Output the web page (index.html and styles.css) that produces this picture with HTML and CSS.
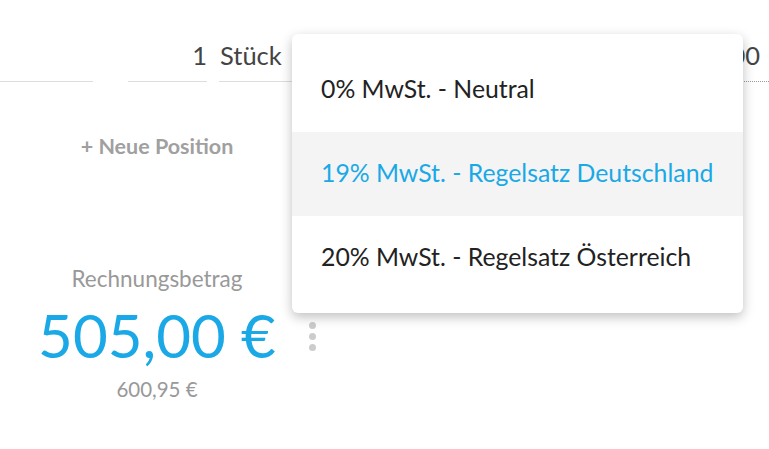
FILE: index.html
```
<!doctype html>
<html lang="de">

<head>
	<meta charset="UTF-8" />
	<meta name="viewport" content="width=device-width, initial-scale=1.0" />
	<title>Rechnung</title>
	<link rel="stylesheet" href="styles.css">
</head>

<body>
	<div class="page">
		<div class="position-row">
			<div class="field field-name"></div>
			<div class="field field-qty">1</div>
			<div class="field field-unit">Stück</div>
			<div class="field field-price">00</div>
		</div>

		<div class="add-row">
			<span class="add-position">+ Neue Position</span>
		</div>

		<div class="summary">
			<div class="total">
				<div class="total-label">Rechnungsbetrag</div>
				<div class="total-amount">505,00 €</div>
				<div class="total-gross">600,95 €</div>
			</div>
			<div class="kebab">
				<span></span>
				<span></span>
				<span></span>
			</div>
		</div>

		<ul class="tax-menu">
			<li class="tax-option">0% MwSt. - Neutral</li>
			<li class="tax-option selected">19% MwSt. - Regelsatz Deutschland</li>
			<li class="tax-option">20% MwSt. - Regelsatz Österreich</li>
		</ul>
	</div>
</body>

</html>
```
FILE: styles.css
```
body {
	font-family: Lato, "Open Sans", sans-serif;
	margin: 0;
	background: #fff;
	color: #222;
}

.page {
	position: relative;
	width: 769px;
	height: 449px;
	overflow: hidden;
}

.position-row {
	display: flex;
	padding-top: 42px;
}

.field {
	height: 40px;
	line-height: 26px;
	font-size: 25.5px;
	color: #444;
	border-bottom: 1px solid #ddd;
	box-sizing: border-box;
}

.field-name {
	width: 93px;
	margin-right: 35px;
}

.field-qty {
	width: 79px;
	margin-right: 12px;
	text-align: right;
	padding-right: 0;
}

.field-unit {
	width: 200px;
	padding-left: 1px;
}

.field-price {
	flex: 1;
	margin-left: 20px;
	text-align: right;
	padding-right: 9px;
	border-bottom: 1px dotted #999;
}

.add-row {
	width: 314px;
	text-align: center;
	padding-top: 50px;
	line-height: 28px;
}

.add-position {
	font-size: 21.5px;
	font-weight: bold;
	color: #a0a0a0;
}

.summary {
	display: flex;
	align-items: flex-start;
	margin-top: 103px;
}

.total {
	width: 314px;
	text-align: center;
}

.total-label {
	font-size: 22.5px;
	line-height: 28px;
	color: #999;
}

.total-amount {
	margin-top: 10px;
	font-size: 60px;
	line-height: 64px;
	color: #1aa9e6;
}

.total-gross {
	margin-top: 10px;
	font-size: 20.5px;
	line-height: 24px;
	color: #999;
}

.kebab {
	display: flex;
	flex-direction: column;
	gap: 4px;
	margin-left: -5px;
	margin-top: 57px;
}

.kebab span {
	width: 7px;
	height: 7px;
	border-radius: 50%;
	background: #ccc;
}

.tax-menu {
	position: absolute;
	left: 292px;
	top: 34px;
	width: 451px;
	margin: 0;
	padding: 14px 0 13px;
	list-style: none;
	background: #fff;
	border-radius: 6px;
	box-shadow: 0 4px 12px rgba(0, 0, 0, 0.25);
}

.tax-option {
	height: 84px;
	line-height: 82px;
	padding-left: 29px;
	font-size: 24.8px;
	color: #222;
}

.tax-option.selected {
	background: #f4f4f4;
	color: #1aa9e6;
}
```
